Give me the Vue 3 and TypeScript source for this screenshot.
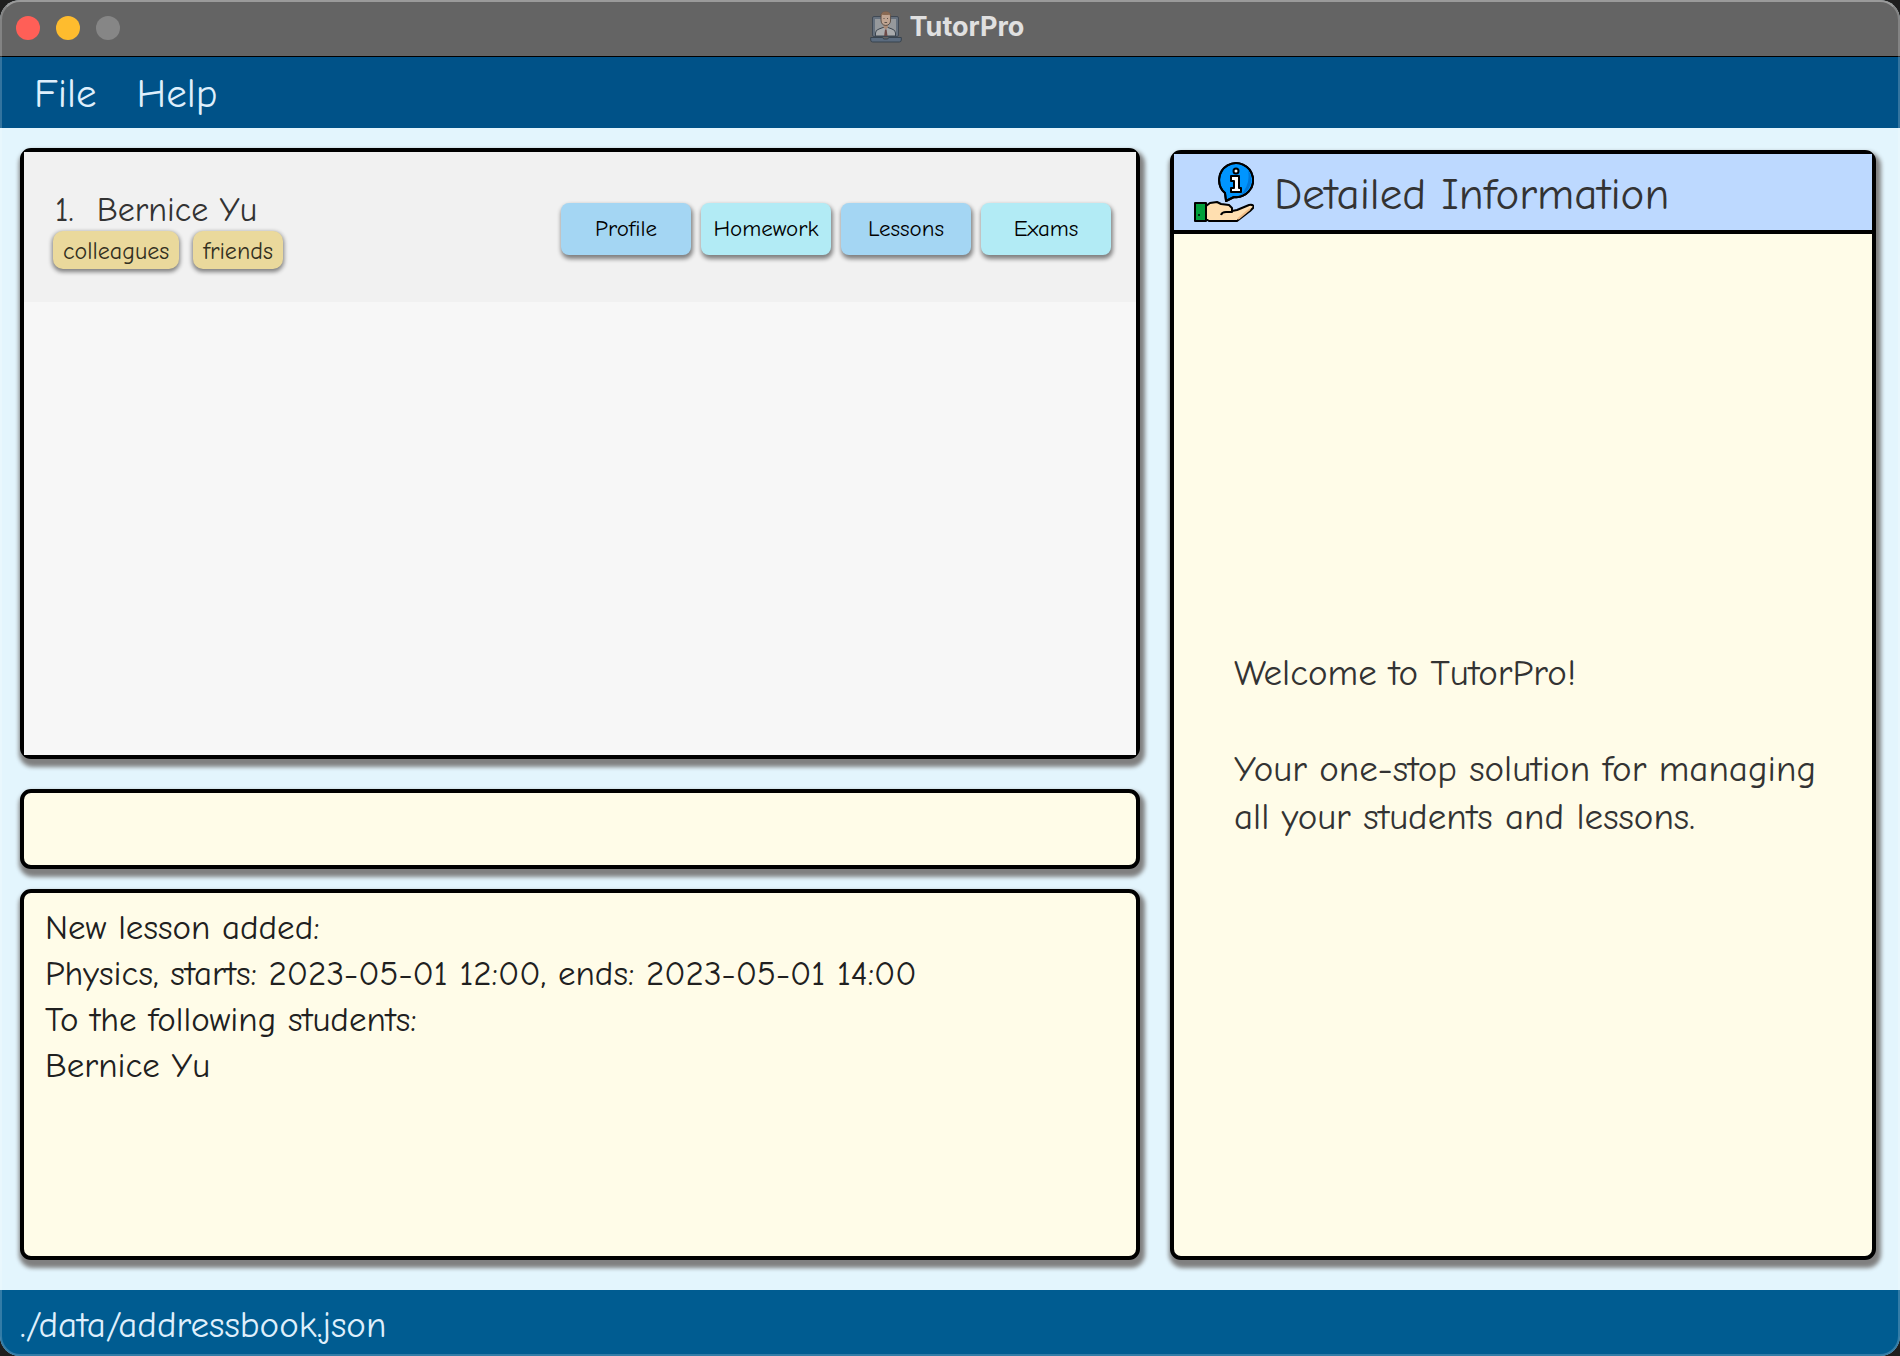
<script setup lang="ts">
import { ref } from 'vue'

interface Student {
  id: number
  name: string
  tags: string[]
}

const students: Student[] = [{ id: 1, name: 'Bernice Yu', tags: ['colleagues', 'friends'] }]
const menus: string[] = ['File', 'Help']
const views: string[] = ['Profile', 'Homework', 'Lessons', 'Exams']
const command = ref('')
const result: string = [
  'New lesson added:',
  'Physics, starts: 2023-05-01 12:00, ends: 2023-05-01 14:00',
  'To the following students:',
  'Bernice Yu',
].join('\n')
</script>

<template>
  <div class="window">
    <header class="titlebar">
      <div class="lights">
        <button class="light close" aria-label="Close"></button>
        <button class="light minimise" aria-label="Minimise"></button>
        <button class="light zoom" aria-label="Zoom" disabled></button>
      </div>
      <h1 class="app-title">
        <svg class="app-icon" viewBox="0 0 32 32" aria-hidden="true">
          <rect x="2.5" y="5.5" width="26" height="20" rx="1.5" fill="#66717e" stroke="#414a55" />
          <rect x="5" y="8" width="21" height="17" fill="#96999c" />
          <path d="M5.5 25v-3q0-3 3.500-4l4-1.500h5l4 1.500q3.500 1 3.500 4v3z" fill="#a9abad" stroke="#3d4650" />
          <path d="M13.500 13h4.500v3.500l-2.200 2-2.300-2z" fill="#a98a76" />
          <path d="M15 18.500h1.600l.9 6.500h-3.400z" fill="#6d4a48" />
          <path d="M11 5q0-4 4.800-4t4.800 4v4q0 5-4.800 5.500-4.800-.5-4.800-5.500z" fill="#c0a592" stroke="#5d5149" />
          <path d="M11 5.500q0-5 4.800-5t4.800 5l-1.200-1.800q-3.800.6-7.200 0z" fill="#8a6a53" />
          <path d="M13.500 7.500h1M17 7.500h1M14.500 11.500h2.600" stroke="#5d5149" fill="none" />
          <path d="M.7 26.500h12l1 1.500h4l1-1.500h12.600v2.500q0 2-2 2H2.700q-2 0-2-2z" fill="#5b6b7e" stroke="#39444f" />
        </svg>
        TutorPro
      </h1>
    </header>

    <nav class="menubar">
      <button v-for="menu in menus" :key="menu" class="menu">{{ menu }}</button>
    </nav>

    <main class="content">
      <section class="left">
        <div class="panel list-panel">
          <ul class="students">
            <li v-for="student in students" :key="student.id" class="student">
              <div class="identity">
                <div class="name"><span>{{ student.id }}.</span><span>{{ student.name }}</span></div>
                <div class="tags">
                  <span v-for="tag in student.tags" :key="tag" class="tag">{{ tag }}</span>
                </div>
              </div>
              <div class="views">
                <button v-for="view in views" :key="view" class="view">{{ view }}</button>
              </div>
            </li>
          </ul>
        </div>
        <input v-model="command" class="panel command" type="text" aria-label="Command" />
        <textarea class="panel result" aria-label="Result" readonly :value="result"></textarea>
      </section>

      <section class="panel details">
        <header class="details-head">
          <svg class="info-icon" viewBox="0 0 60 60" aria-hidden="true" stroke="#000" stroke-width="2" stroke-linejoin="round">
            <path d="M31 31A17 17 0 1 1 40 35L32 39z" fill="#0095ff" />
            <path d="M54 8A17 17 0 0 1 45 34Q57 24 54 8z" fill="#0077d9" stroke="none" />
            <path d="M31 31A17 17 0 1 1 40 35L32 39z" fill="none" />
            <circle cx="42" cy="9" r="2.5" fill="#fff" />
            <path d="M37 14h8v12h2v4H37v-4h3v-7h-3z" fill="#fff" />
            <path d="M1 41h11v18H1z" fill="#00a03c" />
            <path d="M12 44l4-3 7-1 4 2 8 1 3 3v3l5-1 12-5q4-1 5 2l-4 4-13 10H15l-3-2z" fill="#ffdfb0" />
            <path d="M44 57L56 47" stroke="#f2bd86" fill="none" />
            <path d="M27 53q1-3 5-3h6v-2" fill="none" />
            <circle cx="5" cy="53" r="1" fill="#000" stroke="none" />
          </svg>
          <h2 class="details-title">Detailed Information</h2>
        </header>
        <div class="welcome">
          <p>Welcome to TutorPro!</p>
          <p>Your one-stop solution for managing<br />all your students and lessons.</p>
        </div>
      </section>
    </main>

    <footer class="statusbar">./data/addressbook.json</footer>
  </div>
</template>

<style>
body {
  margin: 0;
  background: #1e1e1e;
}
</style>

<style scoped>
* {
  box-sizing: border-box;
}

.window {
  position: relative;
  display: flex;
  flex-direction: column;
  min-height: 100vh;
  overflow: hidden;
  border-radius: 20px;
  background: #e3f5fd;
  font-family: 'Comic Sans MS', 'Comic Neue', 'Open Sans', sans-serif;
  color: #333;
}

/* Translucent rim drawn over the whole window */
.window::after {
  content: '';
  position: absolute;
  inset: 0;
  border: 2px solid rgba(255, 255, 255, 0.2);
  border-top-color: rgba(255, 255, 255, 0.35);
  border-radius: 20px;
  pointer-events: none;
}

button,
input,
textarea {
  margin: 0;
  border: 0;
  font-family: inherit;
}

.titlebar {
  display: grid;
  grid-template-columns: 1fr auto 1fr;
  align-items: center;
  height: 57px;
  border-bottom: 1px solid #000;
  background: #646464;
}

.lights {
  display: flex;
  gap: 16px;
  padding-left: 16px;
}

.light {
  width: 24px;
  height: 24px;
  padding: 0;
  border-radius: 50%;
}

.close {
  background: #ff5f57;
}

.minimise {
  background: #febc2e;
}

.zoom {
  background: #868686;
}

.app-title {
  display: flex;
  align-items: center;
  gap: 8px;
  margin: 0;
  padding: 0 6px 2px 0;
  font: 700 27px/32px Inter, sans-serif;
  color: #e0e0e0;
}

.app-icon {
  width: 32px;
  height: 32px;
}

.menubar {
  display: flex;
  gap: 40px;
  height: 71px;
  padding: 2px 34px 0;
  background: #005288;
}

.menu {
  padding: 0;
  background: none;
  font-size: 41px;
  color: #dfeffc;
}

.content {
  display: grid;
  grid-template-columns: 1120fr 706fr;
  gap: 30px;
  flex: 1;
  padding: 20px 24px 30px 20px;
}

.left {
  display: flex;
  flex-direction: column;
}

.panel {
  border: 4px solid #000;
  border-radius: 11px;
  background: #fffce8;
  box-shadow: 2px 5px 4px 3px #808080;
}

.list-panel {
  display: flex;
  flex: 1;
  margin-bottom: 30px;
}

.students {
  flex: 1;
  margin: 0;
  padding: 0;
  list-style: none;
  background: #f7f7f7;
}

.student {
  display: flex;
  align-items: center;
  justify-content: space-between;
  height: 150px;
  padding: 3px 25px 0 29px;
  background: #f1f1f1;
}

.name {
  display: flex;
  gap: 23px;
  padding-left: 2px;
  font-size: 34px;
  line-height: 42px;
}

.tags {
  display: flex;
  gap: 14px;
}

.tag {
  height: 38px;
  padding: 0 10px;
  border-radius: 10px;
  background: #ead99c;
  box-shadow: 0 2px 4px 1px #808080;
  font-size: 24px;
  line-height: 40px;
  color: #33301f;
}

.views {
  display: flex;
  gap: 10px;
}

.view {
  width: 130px;
  height: 52px;
  padding: 0;
  border-radius: 8px;
  background: #b2ebf5;
  box-shadow: 1px 3px 4px 1px #808080;
  font-size: 23px;
  color: #000;
}

.view:nth-child(odd) {
  background: #a4d6f3;
}

.command {
  width: 100%;
  height: 80px;
  margin-bottom: 20px;
  padding: 0 20px;
  font-size: 35px;
}

.result {
  width: 100%;
  height: 371px;
  padding: 12px 21px;
  outline: 0;
  resize: none;
  font-size: 35px;
  line-height: 46px;
  color: #202020;
}

.details {
  display: flex;
  flex-direction: column;
  margin-top: 2px;
}

.details-head {
  display: flex;
  align-items: center;
  gap: 20px;
  height: 80px;
  padding: 0 20px;
  border-bottom: 4px solid #000;
  background: #bdd9ff;
}

.info-icon {
  width: 60px;
  height: 60px;
}

.details-title {
  margin: 0;
  padding-top: 4px;
  font-size: 45px;
  font-weight: 400;
}

.welcome {
  display: flex;
  flex: 1;
  flex-direction: column;
  justify-content: center;
  gap: 48px;
  padding: 0 32px 0 60px;
  font-size: 37px;
  line-height: 48px;
}

.welcome p {
  margin: 0;
}

.statusbar {
  height: 66px;
  padding: 0 20px;
  background: #005c91;
  font-size: 37px;
  line-height: 70px;
  color: #dfeffc;
}
</style>
